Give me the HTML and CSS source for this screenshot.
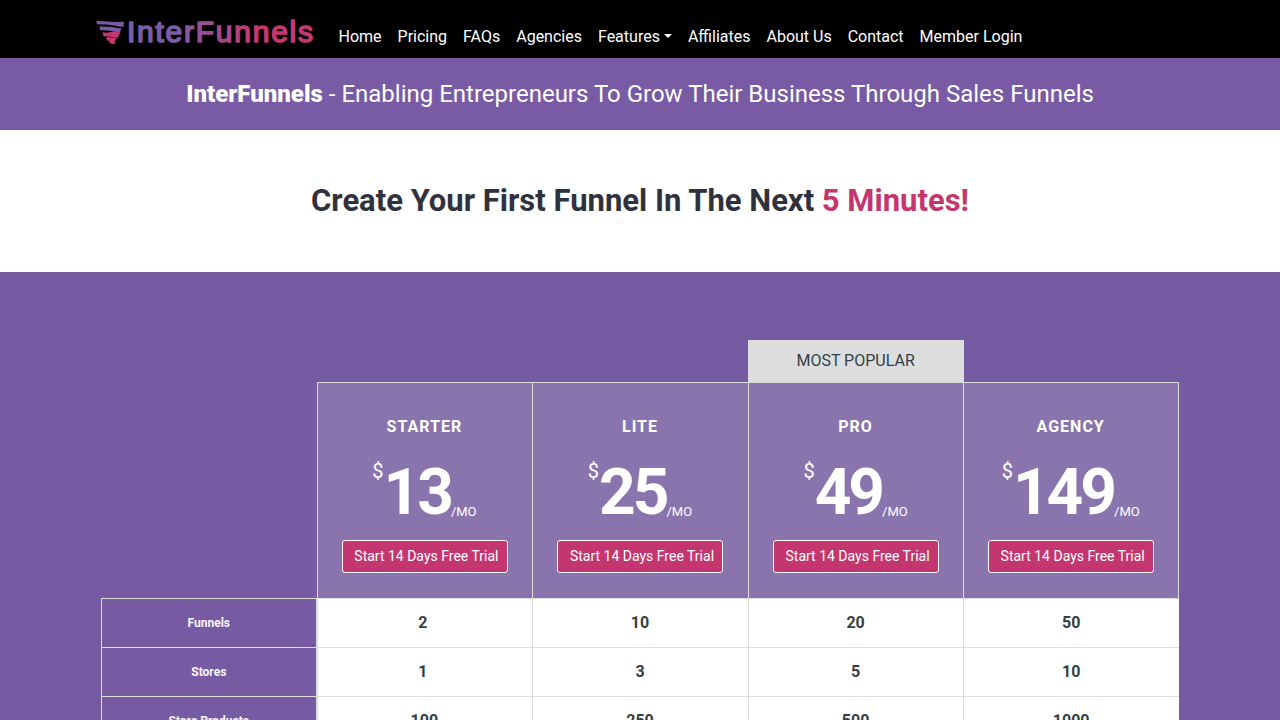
FILE: index.html
```html
<!DOCTYPE html>
<html lang="en">
<head>
<meta charset="utf-8">
<title>InterFunnels - Pricing</title>
<link rel="stylesheet" href="styles.css">
</head>
<body>
<header class="navbar">
  <a class="brand" aria-label="InterFunnels">
    <svg width="222" height="34" viewBox="0 0 222 34">
      <defs>
        <linearGradient id="word" gradientUnits="userSpaceOnUse" x1="80" y1="0" x2="165" y2="0">
          <stop offset="0" stop-color="#7a5ca5"/><stop offset="1" stop-color="#c7376f"/>
        </linearGradient>
      </defs>
      <path fill="#785ba4" d="M0.500 4.800Q14 6.300 28 5.800L27.500 10.500Q23.500 11.500 20 9.700Q11 8.300 0.800 8.300Z"/>
      <path fill="#785ba4" d="M3.300 10.500Q15 10.300 25.500 12.500L24.300 15.700Q20 16.600 16 14.900Q10 14 4.300 14.200Z"/>
      <path fill="#c7376f" d="M6.500 16.300Q12 17.300 17 15.600L24.500 16.300L21.500 22Q15 20.300 7.500 20.300Z"/>
      <path fill="#c7376f" d="M10.300 21.300Q15 20.800 21 22.200L18.800 24.300L19 28Q14.500 28.300 12.500 26L14 25L10.700 24.300Z"/>
      <text class="wordmark" x="31" y="26" textLength="186" lengthAdjust="spacing" fill="url(#word)" stroke="url(#word)">InterFunnels</text>
    </svg>
  </a>
  <nav class="nav">
    <a>Home</a><a>Pricing</a><a>FAQs</a><a>Agencies</a><a class="dropdown">Features</a><a>Affiliates</a><a>About Us</a><a>Contact</a><a>Member Login</a>
  </nav>
</header>
<div class="tagline"><p><b>InterFunnels</b> - Enabling Entrepreneurs To Grow Their Business Through Sales Funnels</p></div>
<div class="headline"><h1>Create Your First Funnel In The Next <span>5 Minutes!</span></h1></div>
<main class="pricing">
  <div class="labels">
    <div class="label">Funnels</div><div class="label">Stores</div><div class="label">Store Products</div>
  </div>
  <section class="plan">
    <div class="plan-head"><h2>STARTER</h2><div class="price"><sup>$</sup><strong>13</strong><sub>/MO</sub></div><a class="button">Start 14 Days Free Trial</a></div>
    <div class="value spaced">2</div><div class="value spaced">1</div><div class="value">100</div>
  </section>
  <section class="plan">
    <div class="plan-head"><h2>LITE</h2><div class="price"><sup>$</sup><strong>25</strong><sub>/MO</sub></div><a class="button">Start 14 Days Free Trial</a></div>
    <div class="value">10</div><div class="value">3</div><div class="value">250</div>
  </section>
  <section class="plan">
    <div class="popular">MOST POPULAR</div>
    <div class="plan-head"><h2>PRO</h2><div class="price"><sup>$</sup><strong>49</strong><sub>/MO</sub></div><a class="button">Start 14 Days Free Trial</a></div>
    <div class="value">20</div><div class="value">5</div><div class="value">500</div>
  </section>
  <section class="plan">
    <div class="plan-head"><h2>AGENCY</h2><div class="price"><sup>$</sup><strong>149</strong><sub>/MO</sub></div><a class="button">Start 14 Days Free Trial</a></div>
    <div class="value">50</div><div class="value">10</div><div class="value">1000</div>
  </section>
</main>
</body>
</html>
```
FILE: styles.css
```css
* { box-sizing: border-box; }
html, body { height: 720px; overflow: hidden; }
body { margin: 0; font-family: Roboto, sans-serif; font-size: 16px; line-height: 24px; color: #343f45; display: flex; flex-direction: column; }
h1, h2, p { margin: 0; }
.navbar { flex: none; height: 58px; background: #000; display: flex; padding: 16px 0 0 96px; }
.brand { width: 234.5px; flex: none; }
.brand svg { display: block; }
.wordmark { font-family: "Liberation Sans", sans-serif; font-size: 30px; stroke-width: 1.6px; stroke-linejoin: round; }
.nav { display: flex; padding-top: 9px; color: #fff; }
.nav a { padding: 0 8px; white-space: nowrap; }
.dropdown::after { content: ""; display: inline-block; margin-left: 4px; vertical-align: 4px; border: 4.800px solid transparent; border-top-color: #fff; border-bottom: 0; }
.tagline { flex: none; height: 72px; padding-top: 18px; background: #785ba4; color: #fff; text-align: center; font-size: 24px; line-height: 36px; }
.tagline b { font-weight: 900; }
.headline { flex: none; height: 142px; padding-top: 51px; background: #fff; text-align: center; }
.headline h1 { font-size: 31px; line-height: 40px; font-weight: 700; color: #2f323c; }
.headline span { color: #c4366f; }
.pricing { flex: 1; min-height: 0; overflow: hidden; background: #765aa2; display: grid; grid-template-columns: repeat(5, 215.6px); padding: 68px 101px 0; }
.labels { padding-top: 258px; }
.label { height: 49px; border: solid #ddd; border-width: 1px 1px 0; display: flex; align-items: center; justify-content: center; color: #f8f6fb; font-size: 12px; font-weight: 700; }
.plan { padding-top: 42px; }
.popular { height: 42px; margin: -42px -1px 0 0; padding-right: 1px; background: #ddd; text-align: center; line-height: 41px; }
.plan-head { height: 216px; border: solid #ddd; border-width: 1px 0 0 1px; background: #8974ad; color: #fff; display: flex; flex-direction: column; align-items: center; padding-top: 32px; }
.plan-head h2 { font-size: 16px; line-height: 24px; letter-spacing: 1px; padding-right: 1px; }
.price { height: 82px; margin-top: 20px; display: flex; justify-content: center; align-items: flex-start; padding-right: 1px; }
.price sup { font-size: 20px; line-height: 24px; }
.price strong { font-size: 64px; line-height: 64px; letter-spacing: -3px; margin-top: 2px; }
.price sub { font-size: 13px; line-height: 16px; margin-top: 45px; }
.button { width: 166px; height: 33px; background: #c4366f; border: 1px solid #fff; border-radius: 3px; text-align: center; font-size: 14px; line-height: 30px; padding-left: 3px; margin-top: -1px; }
.value { height: 49px; border: solid #ddd; border-width: 1px 0 0 1px; background: #fff; display: flex; align-items: center; justify-content: center; font-weight: 700; padding-right: 1px; }
.value.spaced { padding-right: 4px; }
.plan:last-child .plan-head { border-right-width: 1px; }
```
